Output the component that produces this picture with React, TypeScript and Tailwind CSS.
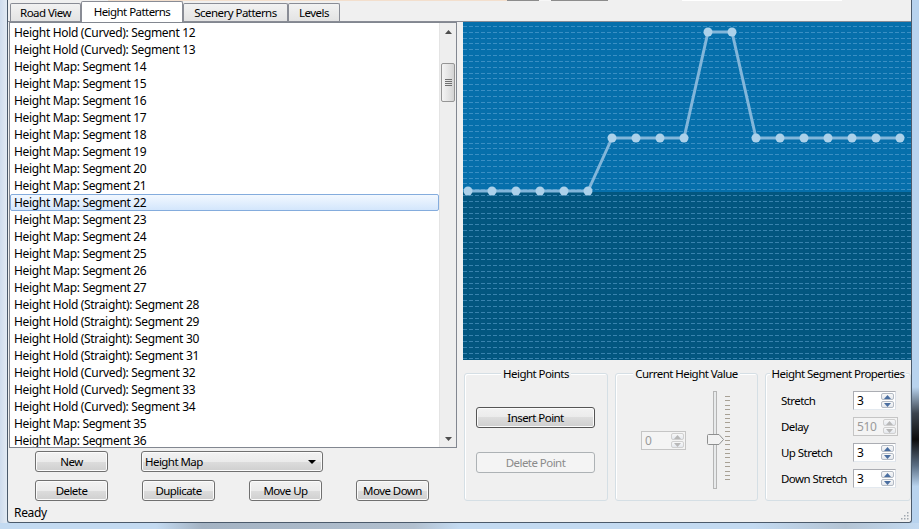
import React from "react";

const items = [
  "Height Hold (Curved): Segment 12",
  "Height Hold (Curved): Segment 13",
  "Height Map: Segment 14",
  "Height Map: Segment 15",
  "Height Map: Segment 16",
  "Height Map: Segment 17",
  "Height Map: Segment 18",
  "Height Map: Segment 19",
  "Height Map: Segment 20",
  "Height Map: Segment 21",
  "Height Map: Segment 22",
  "Height Map: Segment 23",
  "Height Map: Segment 24",
  "Height Map: Segment 25",
  "Height Map: Segment 26",
  "Height Map: Segment 27",
  "Height Hold (Straight): Segment 28",
  "Height Hold (Straight): Segment 29",
  "Height Hold (Straight): Segment 30",
  "Height Hold (Straight): Segment 31",
  "Height Hold (Curved): Segment 32",
  "Height Hold (Curved): Segment 33",
  "Height Hold (Curved): Segment 34",
  "Height Map: Segment 35",
  "Height Map: Segment 36",
];

// height level of every point, 24px apart
const levels = [0, 0, 0, 0, 0, 0, 1, 1, 1, 1, 2, 2, 1, 1, 1, 1, 1, 1, 1];
const levelY = [169, 116, 10];

// control captions render a bit narrower than the list text
const ui = "text-[11.5px] tracking-[-0.55px]";

function Button({ label, w = "w-[73px]", disabled = false, focused = false }: { label: string; w?: string; disabled?: boolean; focused?: boolean }) {
  if (disabled) {
    return (
      <div className={`${w} h-[21px] flex items-center justify-center rounded-[3px] border border-[#adb2b5] bg-[#f4f4f4] ${ui} text-[#8b8b8b]`}>
        {label}
      </div>
    );
  }
  return (
    <div
      className={`${w} h-[21px] flex items-center justify-center rounded-[3px] border ${
        focused ? "border-[#555555]" : "border-[#707070]"
      } bg-[linear-gradient(to_bottom,#f2f2f2_0%,#ebebeb_50%,#dddddd_50%,#cfcfcf_100%)] shadow-[inset_0_0_0_1px_#fbfbfb] ${ui} text-black`}
    >
      {label}
    </div>
  );
}

function Tab({ label, w, active = false }: { label: string; w: string; active?: boolean }) {
  if (active) {
    return (
      <div className={`${w} h-[21px] -mb-px flex items-center justify-center border border-b-0 border-[#898c95] rounded-t-[2px] bg-white ${ui} text-black`}>
        {label}
      </div>
    );
  }
  return (
    <div className={`${w} h-[18px] flex items-center justify-center border border-b-0 border-[#898c95] rounded-t-[2px] bg-[linear-gradient(to_bottom,#f2f2f2,#e3e3e3)] ${ui} text-black`}>
      {label}
    </div>
  );
}

function SpinArrows({ disabled = false }: { disabled?: boolean }) {
  const c = disabled ? "#b8b8b8" : "#4a6ea0";
  return (
    <div className="w-[14px] h-full flex flex-col gap-[1px] py-[1px] pr-[1px]">
      <div className={`flex-1 flex items-center justify-center rounded-[2px] border ${disabled ? "border-[#d0d0d0]" : "border-[#b3bac4]"} bg-[linear-gradient(to_bottom,#f8f8f8,#e4e8ee)]`}>
        <svg width="7" height="4" viewBox="0 0 7 4">
          <path d="M0 4 L3.5 0 L7 4 Z" fill={c} />
        </svg>
      </div>
      <div className={`flex-1 flex items-center justify-center rounded-[2px] border ${disabled ? "border-[#d0d0d0]" : "border-[#b3bac4]"} bg-[linear-gradient(to_bottom,#f8f8f8,#e4e8ee)]`}>
        <svg width="7" height="4" viewBox="0 0 7 4">
          <path d="M0 0 L3.5 4 L7 0 Z" fill={c} />
        </svg>
      </div>
    </div>
  );
}

function Spin({ value, w = "w-[43px]", disabled = false }: { value: string; w?: string; disabled?: boolean }) {
  return (
    <div
      className={`${w} h-[19px] flex items-stretch border ${
        disabled ? "border-[#c5c5c5] bg-[#f4f4f4]" : "border-[#abadb3] border-b-[#e3e9ef] border-r-[#dbdfe6] bg-white"
      }`}
    >
      <div className={`flex-1 pl-[3px] flex items-center text-[12px] ${disabled ? "text-[#9a9a9a]" : "text-black"}`}>{value}</div>
      <SpinArrows disabled={disabled} />
    </div>
  );
}

function Group({ title, w, children }: { title: string; w: string; children: React.ReactNode }) {
  return (
    <div className={`${w} h-[128px] relative rounded-[3px] border border-[#d5dfe5] shadow-[inset_1px_1px_0_#ffffff]`}>
      <div className="absolute -top-[9px] -left-[4px] -right-[4px] flex justify-center">
        <span className={`px-[2px] bg-[#f0f0f0] ${ui} leading-[17px] text-black whitespace-nowrap`}>{title}</span>
      </div>
      {children}
    </div>
  );
}

function Graph() {
  const rows: number[] = [];
  for (let y = 4; y < 338; y += 5.833) rows.push(y);
  const pts = levels.map((l, i) => [5 + i * 24, levelY[l]]);
  return (
    <svg width="448" height="338" className="block">
      <rect x="0" y="0" width="448" height="170" fill="#066fab" />
      <rect x="0" y="170" width="448" height="168" fill="#02567f" />
      {rows.map((y) => (
        <line key={y} x1="0" x2="448" y1={Math.round(y) + 0.5} y2={Math.round(y) + 0.5} stroke="#6db0dd" strokeOpacity="0.5" strokeDasharray="4 2" />
      ))}
      <polyline points={pts.map((p) => p.join(",")).join(" ")} fill="none" stroke="#82b6da" strokeWidth="3" strokeLinejoin="round" />
      {pts.map(([x, y], i) => (
        <circle key={i} cx={x} cy={y} r="4.5" fill="#acd1ea" />
      ))}
    </svg>
  );
}

function Slider() {
  const ticks = Array.from({ length: 20 }, (_, i) => i);
  return (
    <div className="relative w-[24px] h-[98px]">
      <div className="absolute left-[7px] top-0 w-[4px] h-full border border-[#b5b5b5] bg-[#e8eaeb]" />
      <div className="absolute left-[19px] top-[5px] flex flex-col gap-[3.4px]">
        {ticks.map((t) => (
          <div key={t} className="w-[5px] h-px bg-[#a8a195]" />
        ))}
      </div>
      <svg className="absolute left-[1px] top-[43px]" width="18" height="11" viewBox="0 0 18 11">
        <path d="M1.5 0.5 H12 L16.5 5.5 L12 10.5 H1.5 Q0.5 10.5 0.5 9.5 V1.5 Q0.5 0.5 1.5 0.5 Z" fill="#f2f2f2" stroke="#8e8f8f" />
      </svg>
    </div>
  );
}

export default function App() {
  return (
    <div className="w-[919px] h-[529px] overflow-hidden flex flex-col bg-[#c3daf1] font-['Noto_Sans','Liberation_Sans',sans-serif] tracking-[-0.33px]">
      <div className="flex flex-1 min-h-0">
        <div className="w-[7px] bg-[linear-gradient(to_right,#cfdced,#e2eaf3)]" />
        <div className="flex-1 flex flex-col bg-[#f0f0f0] border-l border-r border-b border-[#4b5a6b] rounded-b-[3px] overflow-hidden">
          {/* remains of the toolbar row above */}
          <div className="h-px flex">
            <div className="w-[100px]" />
            <div className="w-[399px] bg-[#f3dfcd]" />
            <div className="w-[32px] bg-[#8c8c8c]" />
            <div className="w-[12px] bg-[#f7f7f7]" />
            <div className="w-[57px] bg-[#8c8c8c]" />
            <div className="w-[74px]" />
            <div className="w-[160px] bg-white" />
          </div>
          <div className="h-[21px] flex items-end pl-[2px] border-b border-[#898c95]">
            <Tab label="Road View" w="w-[71px]" />
            <Tab label="Height Patterns" w="w-[102px]" active />
            <Tab label="Scenery Patterns" w="w-[105px]" />
            <Tab label="Levels" w="w-[52px]" />
          </div>
          <div className="flex flex-1 min-h-0">
            <div className="w-[448px] ml-px flex flex-col">
              <div className="h-[426px] flex border border-[#828790] bg-white">
                <div className="flex-1 pt-px overflow-hidden">
                  {items.map((it, i) =>
                    i === 10 ? (
                      <div key={it} className="h-[17px] flex items-center pl-[3px] rounded-[2px] border border-[#84acdd] bg-[linear-gradient(to_bottom,#f2f8ff,#d3e6fc)] text-[12px] text-black whitespace-nowrap">
                        {it}
                      </div>
                    ) : (
                      <div key={it} className="h-[17px] flex items-center pl-[4px] text-[12px] text-black whitespace-nowrap">
                        {it}
                      </div>
                    )
                  )}
                </div>
                <div className="w-[17px] flex flex-col bg-[#eeeeee] border-l border-[#e4e4e4]">
                  <div className="h-[17px] flex items-center justify-center">
                    <svg width="7" height="4" viewBox="0 0 7 4">
                      <path d="M0 4 L3.5 0 L7 4 Z" fill="#4d4d4d" />
                    </svg>
                  </div>
                  <div className="mt-[23px] mx-[1px] h-[39px] flex flex-col items-center justify-center gap-[1px] rounded-[2px] border border-[#959595] bg-[linear-gradient(to_right,#f4f4f4,#e2e2e2_60%,#d3d3d3)]">
                    <div className="w-[7px] h-px bg-[#6f6f6f]" />
                    <div className="w-[7px] h-px bg-[#6f6f6f]" />
                    <div className="w-[7px] h-px bg-[#6f6f6f]" />
                    <div className="w-[7px] h-px bg-[#6f6f6f]" />
                  </div>
                  <div className="flex-1" />
                  <div className="h-[17px] flex items-center justify-center">
                    <svg width="7" height="4" viewBox="0 0 7 4">
                      <path d="M0 0 L3.5 4 L7 0 Z" fill="#4d4d4d" />
                    </svg>
                  </div>
                </div>
              </div>
              <div className="mt-[3px] pl-[26px] flex gap-[33px]">
                <Button label="New" />
                <div className={`w-[182px] h-[21px] flex items-center justify-between pl-[3px] pr-[6px] rounded-[3px] border border-[#707070] bg-[linear-gradient(to_bottom,#f2f2f2_0%,#ebebeb_50%,#dddddd_50%,#cfcfcf_100%)] shadow-[inset_0_0_0_1px_#fbfbfb] ${ui} text-black`}>
                  <span>Height Map</span>
                  <svg width="8" height="4" viewBox="0 0 8 4">
                    <path d="M0 0 H8 L4 4 Z" fill="#000" />
                  </svg>
                </div>
              </div>
              <div className="mt-[8px] pl-[26px] flex gap-[34px]">
                <Button label="Delete" />
                <Button label="Duplicate" />
                <Button label="Move Up" />
                <Button label="Move Down" />
              </div>
            </div>
            <div className="w-[448px] ml-[6px] flex flex-col">
              <Graph />
              <div className="mt-[13px] ml-px flex gap-[7px]">
                <Group title="Height Points" w="w-[144px]">
                  <div className="pl-[11px] pt-[33px] flex flex-col gap-[24px]">
                    <Button label="Insert Point" w="w-[119px]" focused />
                    <Button label="Delete Point" w="w-[119px]" disabled />
                  </div>
                </Group>
                <Group title="Current Height Value" w="w-[143px]">
                  <div className="pl-[25px] flex items-start">
                    <div className="mt-[57px]">
                      <Spin value="0" w="w-[45px]" disabled />
                    </div>
                    <div className="mt-[17px] ml-[20px]">
                      <Slider />
                    </div>
                  </div>
                </Group>
                <Group title="Height Segment Properties" w="w-[146px]">
                  <div className="pl-[15px] pt-[17px] flex flex-col gap-[7px]">
                    {[
                      ["Stretch", "3", false],
                      ["Delay", "510", true],
                      ["Up Stretch", "3", false],
                      ["Down Stretch", "3", false],
                    ].map(([l, v, d]) => (
                      <div key={l as string} className="h-[19px] flex items-center">
                        <span className={`w-[72px] ${ui} text-black whitespace-nowrap`}>{l}</span>
                        <Spin value={v as string} w={d ? "w-[45px]" : "w-[43px]"} disabled={d as boolean} />
                      </div>
                    ))}
                  </div>
                </Group>
              </div>
            </div>
          </div>
          <div className="h-[19px] flex items-center justify-between pl-[6px] pr-[2px]">
            <span className="text-[12px] text-black">Ready</span>
            <svg width="10" height="10" viewBox="0 0 10 10" className="self-end mb-[2px]">
              {[
                [8, 0],
                [8, 3],
                [5, 3],
                [8, 6],
                [5, 6],
                [2, 6],
              ].map(([x, y], i) => (
                <rect key={i} x={x} y={y + 2} width="1.5" height="1.5" fill="#a0a8b0" />
              ))}
            </svg>
          </div>
        </div>
        <div className="w-[7px] bg-[linear-gradient(to_bottom,#b8d3ee_0%,#b8d3ee_74%,#3c4650_79%,#0c0c0c_84%,#5a6e84_89%,#b8d3ee_93%)]" />
      </div>
      <div className="h-[6px] bg-[linear-gradient(to_right,#c3daf1_0%,#c3daf1_17%,#a4b3c3_22%,#b2c0cf_45%,#c3daf1_50%,#c3daf1_82%,#b4c4d4_92%,#c3daf1_100%)]" />
    </div>
  );
}
